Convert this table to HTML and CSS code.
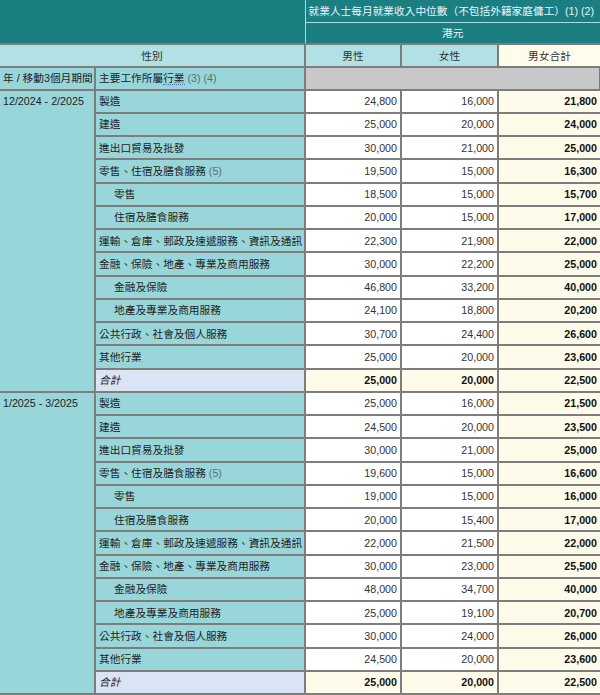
FILE: index.html
```html
<!DOCTYPE html>
<html lang="zh-Hant">
<head>
<meta charset="utf-8">
<link rel="stylesheet" href="styles.css">
</head>
<body>
<table class="tbl">
  <colgroup>
    <col class="c1"><col class="c2"><col class="c3"><col class="c4"><col class="c5">
  </colgroup>
  <tr class="hrow">
    <td class="hcorner" colspan="2" rowspan="2"></td>
    <td class="htitle" colspan="3"><span class="abbr">就業人士每月就業收入</span>中位數（不包括外籍家庭傭工）(1) (2)</td>
  </tr>
  <tr class="hrow">
    <td class="hunit" colspan="3">港元</td>
  </tr>
  <tr class="srow">
    <td class="hsex" colspan="2">性別</td>
    <td class="hsex">男性</td>
    <td class="hsex">女性</td>
    <td class="hsex htot">男女合計</td>
  </tr>
  <tr class="yrow">
    <td class="lab">年 / 移動3個月期間</td>
    <td class="lab">主要工作所屬<span class="abbr2">行業</span> <span class="note">(3) (4)</span></td>
    <td class="grey" colspan="3"></td>
  </tr>
  <tr>
    <td class="lab period" rowspan="13">12/2024 - 2/2025</td>
    <td class="lab">製造</td><td class="num">24,800</td><td class="num">16,000</td><td class="num tot">21,800</td>
  </tr>
  <tr><td class="lab">建造</td><td class="num">25,000</td><td class="num">20,000</td><td class="num tot">24,000</td></tr>
  <tr><td class="lab">進出口貿易及批發</td><td class="num">30,000</td><td class="num">21,000</td><td class="num tot">25,000</td></tr>
  <tr><td class="lab">零售、住宿及膳食服務 <span class="note">(5)</span></td><td class="num">19,500</td><td class="num">15,000</td><td class="num tot">16,300</td></tr>
  <tr><td class="lab sub">零售</td><td class="num">18,500</td><td class="num">15,000</td><td class="num tot">15,700</td></tr>
  <tr><td class="lab sub">住宿及膳食服務</td><td class="num">20,000</td><td class="num">15,000</td><td class="num tot">17,000</td></tr>
  <tr><td class="lab">運輸、倉庫、郵政及速遞服務、資訊及通訊</td><td class="num">22,300</td><td class="num">21,900</td><td class="num tot">22,000</td></tr>
  <tr><td class="lab">金融、保險、地產、專業及商用服務</td><td class="num">30,000</td><td class="num">22,200</td><td class="num tot">25,000</td></tr>
  <tr><td class="lab sub">金融及保險</td><td class="num">46,800</td><td class="num">33,200</td><td class="num tot">40,000</td></tr>
  <tr><td class="lab sub">地產及專業及商用服務</td><td class="num">24,100</td><td class="num">18,800</td><td class="num tot">20,200</td></tr>
  <tr><td class="lab">公共行政、社會及個人服務</td><td class="num">30,700</td><td class="num">24,400</td><td class="num tot">26,600</td></tr>
  <tr><td class="lab">其他行業</td><td class="num">25,000</td><td class="num">20,000</td><td class="num tot">23,600</td></tr>
  <tr><td class="lab total">合計</td><td class="num tot">25,000</td><td class="num tot">20,000</td><td class="num tot">22,500</td></tr>
  <tr>
    <td class="lab period" rowspan="13">1/2025 - 3/2025</td>
    <td class="lab">製造</td><td class="num">25,000</td><td class="num">16,000</td><td class="num tot">21,500</td>
  </tr>
  <tr><td class="lab">建造</td><td class="num">24,500</td><td class="num">20,000</td><td class="num tot">23,500</td></tr>
  <tr><td class="lab">進出口貿易及批發</td><td class="num">30,000</td><td class="num">21,000</td><td class="num tot">25,000</td></tr>
  <tr><td class="lab">零售、住宿及膳食服務 <span class="note">(5)</span></td><td class="num">19,600</td><td class="num">15,000</td><td class="num tot">16,600</td></tr>
  <tr><td class="lab sub">零售</td><td class="num">19,000</td><td class="num">15,000</td><td class="num tot">16,000</td></tr>
  <tr><td class="lab sub">住宿及膳食服務</td><td class="num">20,000</td><td class="num">15,400</td><td class="num tot">17,000</td></tr>
  <tr><td class="lab">運輸、倉庫、郵政及速遞服務、資訊及通訊</td><td class="num">22,000</td><td class="num">21,500</td><td class="num tot">22,000</td></tr>
  <tr><td class="lab">金融、保險、地產、專業及商用服務</td><td class="num">30,000</td><td class="num">23,000</td><td class="num tot">25,500</td></tr>
  <tr><td class="lab sub">金融及保險</td><td class="num">48,000</td><td class="num">34,700</td><td class="num tot">40,000</td></tr>
  <tr><td class="lab sub">地產及專業及商用服務</td><td class="num">25,000</td><td class="num">19,100</td><td class="num tot">20,700</td></tr>
  <tr><td class="lab">公共行政、社會及個人服務</td><td class="num">30,000</td><td class="num">24,000</td><td class="num tot">26,000</td></tr>
  <tr><td class="lab">其他行業</td><td class="num">24,500</td><td class="num">20,000</td><td class="num tot">23,600</td></tr>
  <tr><td class="lab total">合計</td><td class="num tot">25,000</td><td class="num tot">20,000</td><td class="num tot">22,500</td></tr>
</table>
</body>
</html>
```
FILE: styles.css
```css
html, body {
  margin: 0;
  padding: 0;
  background: #ffffff;
}
body {
  font-family: "Liberation Sans", "Noto Sans CJK TC", Arial, sans-serif;
  font-size: 10.7px;
  color: #333333;
}
.tbl {
  border-collapse: collapse;
  table-layout: fixed;
  width: 600px;
}
.c1 { width: 95px; }
.c2 { width: 210px; }
.c3 { width: 96px; }
.c4 { width: 97px; }
.c5 { width: 102px; }
.tbl td {
  border: 2px solid #7d7d7d;
  padding: 0 3px;
  height: 23.25px;
  line-height: 14px;
  white-space: nowrap;
  overflow: hidden;
  box-sizing: border-box;
}
.tbl tr.srow td {
  height: 23px;
}
.tbl tr.yrow td {
  height: 22.5px;
}
.tbl tr.hrow td {
  background: #1b7f82;
  border: 1px solid #a8dcdf;
  color: #e9f4ff;
  height: 22px;
  padding: 0 3px;
}
.tbl tr.hrow td.hcorner {
  border-left: none;
  border-top: none;
  border-bottom: 2px solid #7d7d7d;
}
.tbl tr.hrow td.htitle {
  border-top: none;
  border-right: none;
}
.tbl tr.hrow td.hunit {
  text-align: center;
  border-right: none;
  border-bottom: 2px solid #7d7d7d;
}
.abbr {
  border-bottom: 1px dotted #4a6ee0;
}
.abbr2 {
  border-bottom: 1px dotted #4a6ee0;
}
.hsex {
  background: #b1e1e4;
  text-align: center;
  color: #333333;
}
.hsex.htot {
  background: #fffcec;
}
.lab {
  background: #99d6da;
  color: #222222;
}
.period {
  vertical-align: top;
  padding-top: 3px !important;
}
.sub {
  padding-left: 18px !important;
}
.note {
  color: #5a6f72;
}
.grey {
  background: #c8c8c8;
}
.num {
  background: #ffffff;
  text-align: right;
  color: #333333;
}
.num.tot {
  background: #fffbea;
  font-weight: bold;
  color: #111111;
}
.lab.total {
  background: #dae4f5;
  font-style: italic;
}
.tbl td:first-child {
  border-left: none;
}
.tbl td.num.tot:last-child,
.tbl td.hsex.htot {
  border-right: none;
}
```
